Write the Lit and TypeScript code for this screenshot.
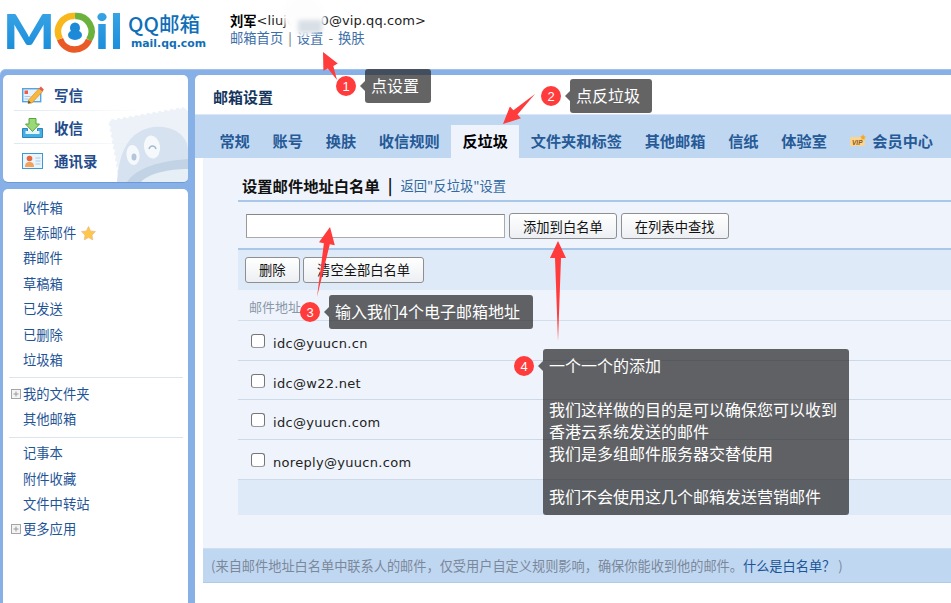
import { LitElement, html, css, svg } from "lit";
import { customElement } from "lit/decorators.js";

type Pt = [number, number];

function arrow(tail: Pt, tip: Pt, wing = 8, head = 17, neck = 3) {
  const dx = tip[0] - tail[0], dy = tip[1] - tail[1];
  const len = Math.hypot(dx, dy), ux = dx / len, uy = dy / len, nx = -uy, ny = ux;
  const bx = tip[0] - ux * head, by = tip[1] - uy * head;
  const p = (o: number): string => `${(bx + nx * o).toFixed(1)},${(by + ny * o).toFixed(1)}`;
  return `${tail[0]},${tail[1]} ${p(neck)} ${p(wing)} ${tip[0]},${tip[1]} ${p(-wing)} ${p(-neck)}`;
}

const ARROWS: Pt[][] = [
  [[337, 80], [323, 52]],
  [[535, 94], [503, 124]],
  [[317, 297], [330, 227]],
  [[558, 341], [558, 241]],
];

const NOTES = [
  { n: 1, cx: 346, cy: 86, x: 365, y: 69, w: 66, h: 34, lines: ["点设置"] },
  { n: 2, cx: 551, cy: 96, x: 570, y: 79, w: 82, h: 34, lines: ["点反垃圾"] },
  { n: 3, cx: 310, cy: 312, x: 329, y: 295, w: 204, h: 34, lines: ["输入我们4个电子邮箱地址"] },
  {
    n: 4, cx: 524, cy: 366, x: 543, y: 349, w: 306, h: 166,
    lines: ["一个一个的添加", "", "我们这样做的目的是可以确保您可以收到", "香港云系统发送的邮件", "我们是多组邮件服务器交替使用", "", "我们不会使用这几个邮箱发送营销邮件"],
  },
];

const TABS = ["常规", "账号", "换肤", "收信规则", "反垃圾", "文件夹和标签", "其他邮箱", "信纸", "体验室"];
const GROUP1 = ["收件箱", "星标邮件", "群邮件", "草稿箱", "已发送", "已删除", "垃圾箱"];
const EMAILS = ["idc@yuucn.cn", "idc@w22.net", "idc@yuucn.com", "noreply@yuucn.com"];

const writeIcon = html`<svg class="ico" width="22" height="18" viewBox="0 0 22 18">
  <rect x=".7" y="2.700" width="18" height="13" fill="#e6f1fb" stroke="#52a5e0" stroke-width="1.400"/>
  <rect x="2.500" y="4.500" width="3.500" height="3.500" fill="#e8604a"/>
  <path d="M2.500 10.500h6M2.500 13h4" stroke="#a9c6e6"/>
  <path d="M6.500 14 L17 2.500 L20.500 5.500 L10 17 L6 17.500Z" fill="#f6b93b" stroke="#d9822b" stroke-width=".6"/>
  <path d="M17 2.500 L18.800 .6 L21.800 3.500 L20.500 5.500Z" fill="#e85a4f"/>
  <path d="M6 17.500 L6.500 14.500 L9 16.800Z" fill="#555"/>
</svg>`;
const recvIcon = html`<svg class="ico" width="21" height="20" viewBox="0 0 21 20">
  <path d="M.5 10.500h5v3h10v-3h5v9H.5Z" fill="#45aee0" stroke="#2b86bd"/>
  <rect x="3.500" y="13" width="14" height="3" fill="#e4f4fb"/>
  <path d="M7 .5h7v5.500h3.500L10.500 13.500 3.500 6H7Z" fill="#9bd877" stroke="#55a83c"/>
</svg>`;
const bookIcon = html`<svg class="ico" width="21" height="16" viewBox="0 0 21 16">
  <rect x=".5" y=".5" width="20" height="15" fill="#eaf4fb" stroke="#3c98d6"/>
  <circle cx="7.500" cy="5.500" r="2.800" fill="#e8663c"/>
  <path d="M3 14c0-4 1.800-5 4.500-5s4.500 1 4.500 5Z" fill="#f3a25d"/>
  <path d="M13.500 5h5M13.500 8h5M13.500 11h5" stroke="#a8c8e2"/>
</svg>`;
const plus = html`<svg class="plus" width="10" height="10" viewBox="0 0 10 10">
  <rect x=".5" y=".5" width="9" height="9" fill="#f4f4f4" stroke="#a5a5a5"/>
  <path d="M2.500 5h5M5 2.500v5" stroke="#999"/>
</svg>`;

@customElement("app-root")
export class AppRoot extends LitElement {
  static styles = css`
    :host {
      display: block; position: relative; width: 951px; height: 603px; overflow: hidden;
      background: #fff; color: #000;
      font-family: "Noto Sans CJK SC", "Liberation Sans", sans-serif; font-size: 13.3px;
    }
    a { color: inherit; text-decoration: none; }

    .top { height: 69px; display: flex; box-sizing: border-box; }
    .logo { display: block; flex: none; }
    .who { margin-left: 12px; padding-top: 10px; }
    .who-line { display: flex; align-items: center; height: 20px; font-size: 13px; white-space: nowrap; }
    .name { font-weight: 700; font-size: 13.300px; }
    .addr { font-family: "DejaVu Sans", sans-serif; font-size: 13px; letter-spacing: .1px; color: #222; }
    .nav { margin-top: -2px; height: 19px; color: #3c6ea8; font-size: 13.300px; gap: 5px; }
    .nav i { font-style: normal; color: #667; }

    .frame {
      height: 534px; display: flex; box-sizing: border-box; padding-top: 6px;
      background: #86b0e6; border-radius: 6px 0 0 0; box-shadow: inset 0 1px 0 #9fc1ec;
    }
    .side { width: 195px; flex: none; box-sizing: border-box; padding: 0 7px 0 3px; display: flex; flex-direction: column; gap: 7px; }
    .panel { background: #fff; border-radius: 5px; position: relative; overflow: hidden; box-shadow: 0 1px 0 #6d9ad6; }
    .quick { height: 107px; flex: none; box-sizing: border-box; padding-top: 3px; }
    .stamp { position: absolute; right: 0; bottom: 0; }
    .q { position: relative; height: 33px; display: flex; align-items: center; box-sizing: border-box; padding-left: 19px; color: #244b8c; font-size: 14.500px; font-weight: 700; }
    .q + .q::before { content: ""; position: absolute; left: 11px; width: 130px; top: -1px; height: 1px; background: linear-gradient(90deg, #dfe8f2, rgba(223,232,242,0)); }
    .icon-box { width: 32px; display: flex; justify-content: flex-start; flex: none; }
    .ico { display: block; }
    .folders { flex: 1; border-radius: 5px 5px 0 0; padding-top: 5.500px; box-shadow: none; }
    .f { height: 25.400px; display: flex; align-items: center; padding-left: 20px; color: #1f5597; position: relative; white-space: nowrap; }
    .plus { position: absolute; left: 8px; top: 8px; }
    .star { margin-left: 5px; display: block; }
    .sep { height: 1px; background: #dce4ee; margin: 5px 5px 2.500px 6px; }

    .main { flex: 1; min-width: 0; background: #fff; border-radius: 5px 0 0 0; display: flex; flex-direction: column; }
    .heading { height: 39px; flex: none; box-sizing: border-box; padding: 12px 0 0 18px; font-size: 15px; line-height: 20px; font-weight: 700; color: #14365e; }
    .tabs {
      height: 44px; flex: none; box-sizing: border-box; padding-left: 13px; display: flex; align-items: flex-end;
      background: #c0d7f2; border-top: 1px solid #dbe7f6; font-size: 15.200px; font-weight: 700; color: #265a96;
    }
    .tab { height: 33px; box-sizing: border-box; padding: 0 11.400px 3px; display: flex; align-items: center; white-space: nowrap; }
    .tab.on { background: #eff4fc; color: #000; }
    .vip { display: block; margin-right: 6px; }
    .tab.member { padding-left: 12px; }

    .body { margin-left: 8px; flex: none; height: 390px; background: #eff4fc; padding-left: 35px; box-sizing: border-box; }
    .title-row { height: 44px; box-sizing: border-box; padding: 12px 0 0 4px; display: flex; align-items: center; border-bottom: 2px solid #a9c7e8; white-space: nowrap; }
    .title-row b { font-size: 15.300px; font-weight: 700; color: #111; }
    .title-row .bar { font-weight: 700; font-size: 16px; margin: 0 8px; color: #111; }
    .title-row a { color: #33699f; font-size: 13.300px; }
    .search { height: 48px; display: flex; align-items: center; padding: 2px 0 0 8px; box-sizing: border-box; border-bottom: 2px solid #a9c7e8; }
    .search .box { width: 259px; height: 24px; box-sizing: border-box; background: #fff; border: 1px solid #aaa; border-top-color: #888; border-left-color: #999; margin-right: 4px; }
    .search .btn { margin-right: 4px; }
    .btn {
      height: 26px; box-sizing: border-box; border: 1px solid #8f8f8f; border-radius: 3px; padding: 0 13px;
      background: linear-gradient(#fff, #eceff3); display: flex; align-items: center; font-size: 13.300px; color: #111; white-space: nowrap;
    }
    .tools { height: 40px; background: #dfeaf8; display: flex; align-items: center; gap: 3.500px; padding-left: 7px; padding-bottom: 1px; box-sizing: border-box; }
    .thead { height: 31px; box-sizing: border-box; border-bottom: 1px solid #d3deeb; display: flex; align-items: center; padding: 2px 0 0 11px; color: #8a97a8; font-size: 13px; }
    .row { height: 39.700px; box-sizing: border-box; border-bottom: 1px solid #ccd9e8; display: flex; align-items: center; padding: 6px 0 0 13px; font-family: "DejaVu Sans", sans-serif; font-size: 13px; color: #222; }
    .check { width: 14px; height: 14px; box-sizing: border-box; background: #fff; border: 1px solid #767676; border-bottom-color: #999; border-radius: 3px; margin: -5px 8px 0 0; }
    .row span { letter-spacing: .3px; }
    .tail { height: 35px; background: #dfeaf8; }

    .foot {
      margin-left: 8px; height: 35px; flex: none; box-sizing: border-box; background: #c0d7f2;
      border-top: 1px solid #cddff3; border-bottom: 1px solid #aecbeb; padding-left: 8px;
      display: flex; align-items: center; color: #7b8899; font-size: 13.200px; white-space: nowrap;
    }
    .foot a { color: #1a5596; }

    .smudge { position: absolute; left: 283px; top: -3px; width: 42px; height: 38px; border-radius: 50%; background: #fdfdfd; filter: blur(2px); }
    .smudge-2 { position: absolute; left: 298px; top: 20px; width: 24px; height: 13px; background: #d8dfe6; filter: blur(2px); border-radius: 2px; }

    .arrows { position: absolute; left: 0; top: 0; pointer-events: none; }
    .dot {
      position: absolute; width: 20px; height: 20px; border-radius: 50%; background: #ff3b3b; color: #fff;
      display: flex; align-items: center; justify-content: center; font: 13px "Liberation Sans", sans-serif;
    }
    .note {
      position: absolute; box-sizing: border-box; padding: 6px 6px 0; background: rgba(40,40,42,.72); border-radius: 3px;
      color: #fff; font-size: 16px; line-height: 21.900px; white-space: nowrap;
    }
    .note::before {
      content: ""; position: absolute; left: -5px; top: 12px; border: 5px solid transparent; border-left: 0;
      border-right-color: rgba(40,40,42,.72);
    }
    .note div { height: 21.900px; }
  `;

  private logo() {
    return html`<svg class="logo" width="218" height="60" viewBox="0 0 218 60">
      <defs>
        <linearGradient id="lg" x1="0" y1="0" x2="0" y2="1">
          <stop offset="0" stop-color="#3fa9e8"/><stop offset="1" stop-color="#1488d8"/>
        </linearGradient>
      </defs>
      <text x="3" y="49" font-family="Lato" font-weight="900" font-size="47" fill="url(#lg)" textLength="52" lengthAdjust="spacingAndGlyphs">M</text>
      <g fill="none" stroke-width="6.500">
        <path d="M75 16 A15.500 15.500 0 0 1 89 40" stroke="#6ab23b"/>
        <path d="M89 40 A15.500 15.500 0 0 1 60 39" stroke="#ea5a27"/>
        <path d="M60 39 A15.500 15.500 0 0 1 75 16" stroke="#f8b71b"/>
      </g>
      <ellipse cx="75" cy="28" rx="5" ry="5.500" fill="#1c8ad6"/>
      <ellipse cx="75" cy="35" rx="7" ry="5" fill="#1c8ad6"/>
      <text x="95" y="49" font-family="Lato" font-weight="900" font-size="47" fill="url(#lg)" textLength="14" lengthAdjust="spacingAndGlyphs">i</text>
      <text x="110" y="49" font-family="Lato" font-weight="900" font-size="47" fill="url(#lg)" textLength="13" lengthAdjust="spacingAndGlyphs">l</text>
      <text x="128" y="32" font-family="Noto Sans CJK SC" font-size="20.500" font-weight="500" fill="#0f6fb8">QQ邮箱</text>
      <text x="131" y="47" font-family="DejaVu Sans" font-size="11" font-weight="700" fill="#0f6fb8" textLength="75" lengthAdjust="spacingAndGlyphs">mail.qq.com</text>
    </svg>`;
  }

  private stamp() {
    return html`<svg class="stamp" width="85" height="75" viewBox="0 0 85 75">
      <path d="M5 13 L80 0 L85 4 V75 H16Z" fill="#edf2f9"/>
      <path d="M5 13 L80 0" stroke="#fff" stroke-width="2.500" stroke-dasharray="3 3" fill="none"/>
      <path d="M5 13 L16 75" stroke="#fff" stroke-width="2.500" stroke-dasharray="3 3" fill="none"/>
      <path d="M14 75 C16 44 26 24 50 20 C70 18 85 28 85 44 V75Z" fill="#d6e2ef"/>
      <path d="M24 75 C34 60 58 54 85 52 V75Z" fill="#c2d3e5"/>
      <path d="M38 75 C46 66 66 62 85 62 V75Z" fill="#e6eef6"/>
      <ellipse cx="30" cy="48" rx="6.500" ry="10" fill="#f6f9fc" transform="rotate(-8 30 48)"/>
      <ellipse cx="49" cy="40" rx="8" ry="11.500" fill="#f6f9fc" transform="rotate(-8 49 40)"/>
      <ellipse cx="31" cy="50" rx="2.500" ry="3.500" fill="#b4c6da"/>
      <path d="M46 42 C47 38 52 38 53 42" stroke="#a6bbd2" stroke-width="1.500" fill="none"/>
    </svg>`;
  }

  render() {
    return html`
      <div class="top">
        ${this.logo()}
        <div class="who">
          <div class="who-line"><span class="name">刘军</span><span class="addr">&lt;liuj00000@vip.qq.com&gt;</span></div>
          <div class="who-line nav"><a>邮箱首页</a><i>|</i><a>设置</a><i>-</i><a>换肤</a></div>
        </div>
      </div>
      <div class="smudge"></div><div class="smudge-2"></div>

      <div class="frame">
        <div class="side">
          <div class="panel quick">
            ${this.stamp()}
            <div class="q"><span class="icon-box">${writeIcon}</span>写信</div>
            <div class="q"><span class="icon-box">${recvIcon}</span>收信</div>
            <div class="q"><span class="icon-box">${bookIcon}</span>通讯录</div>
          </div>
          <div class="panel folders">
            ${GROUP1.map((f, i) => html`<div class="f">${f}${i === 1
              ? html`<svg class="star" width="15" height="14" viewBox="0 0 15 14"><path d="M7.500 0.500l2.100 4.400 4.900.7-3.500 3.400.8 4.900-4.300-2.300-4.300 2.300.8-4.900L.5 5.600l4.900-.7Z" fill="#fdc74e" stroke="#efb27a" stroke-width=".6"/></svg>`
              : ""}</div>`)}
            <div class="sep"></div>
            <div class="f">${plus}我的文件夹</div>
            <div class="f">其他邮箱</div>
            <div class="sep"></div>
            <div class="f">记事本</div>
            <div class="f">附件收藏</div>
            <div class="f">文件中转站</div>
            <div class="f">${plus}更多应用</div>
          </div>
        </div>

        <div class="main">
          <div class="heading">邮箱设置</div>
          <div class="tabs">
            ${TABS.map((t) => html`<div class="tab ${t === "反垃圾" ? "on" : ""}">${t}</div>`)}
            <div class="tab member">
              <svg class="vip" width="16" height="13" viewBox="0 0 16 13">
                <rect x="0" y="3" width="15" height="9" rx="1" fill="#fbd58e"/>
                <path d="M13 0l.9 2.300 2.100.4-1.700 1.400.5 2.200-1.800-1.200-1.800 1.200.5-2.200L10 2.700l2.100-.4Z" fill="#f5a623"/>
                <text x="2" y="10.500" font-family="Liberation Sans" font-size="6.500" font-style="italic" font-weight="700" fill="#8a5a1e">VIP</text>
              </svg>
              会员中心
            </div>
          </div>
          <div class="body">
            <div class="title-row"><b>设置邮件地址白名单</b><span class="bar">|</span><a>返回"反垃圾"设置</a></div>
            <div class="search">
              <div class="box"></div>
              <div class="btn">添加到白名单</div>
              <div class="btn">在列表中查找</div>
            </div>
            <div class="tools"><div class="btn">删除</div><div class="btn">清空全部白名单</div></div>
            <div class="thead">邮件地址</div>
            ${EMAILS.map((e) => html`<div class="row"><div class="check"></div><span>${e}</span></div>`)}
            <div class="tail"></div>
          </div>
          <div class="foot">(来自邮件地址白名单中联系人的邮件，仅受用户自定义规则影响，确保你能收到他的邮件。<a>什么是白名单？</a>&nbsp;)</div>
        </div>
      </div>

      <svg class="arrows" width="951" height="603" viewBox="0 0 951 603">
        ${ARROWS.map(([a, b]) => svg`<polygon points=${arrow(a, b)} fill="#ff3b3b"/>`)}
      </svg>
      ${NOTES.map((n) => html`
        <div class="dot" style="left:${n.cx - 10}px;top:${n.cy - 10}px">${n.n}</div>
        <div class="note" style="left:${n.x}px;top:${n.y}px;width:${n.w}px;height:${n.h}px">
          ${n.lines.map((l) => html`<div>${l}</div>`)}
        </div>`)}
    `;
  }
}
